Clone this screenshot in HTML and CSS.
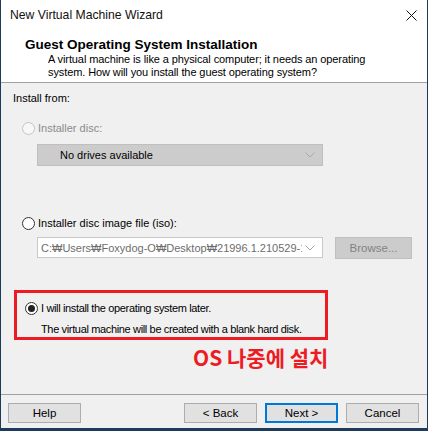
FILE: index.html
```html
<!DOCTYPE html>
<html lang="en">
<head>
    <meta charset="UTF-8" />
    <title>New Virtual Machine Wizard</title>
    <link rel="stylesheet" href="styles.css">
</head>
<body>
    <div class="window">
        <div class="titlebar">
            <span class="title">New Virtual Machine Wizard</span>
            <svg class="close" width="11" height="11" viewBox="0 0 11 11">
                <path d="M0.5 0.5 L10.5 10.5 M10.5 0.5 L0.5 10.5" stroke="#111" stroke-width="1" fill="none"/>
            </svg>
        </div>

        <!-- header with page title -->
        <div class="header">
            <div class="heading">Guest Operating System Installation</div>
            <div class="desc">A virtual machine is like a physical computer; it needs an operating<br>system. How will you install the guest operating system?</div>
        </div>

        <div class="content">
            <div class="label">Install from:</div>

            <div class="option disabled first">
                <span class="radio"></span>
                <span>Installer disc:</span>
            </div>
            <div class="combo grey">
                <span class="combo-text">No drives available</span>
                <svg class="chev" width="10" height="6" viewBox="0 0 10 6"><path d="M0.5 0.5 L5 5 L9.5 0.5" stroke="#a8a8a8" fill="none"/></svg>
            </div>

            <div class="option second">
                <span class="radio"></span>
                <span>Installer disc image file (iso):</span>
            </div>
            <div class="file-row">
                <div class="combo white">
                    <span class="combo-text path">C:&#8361;Users&#8361;Foxydog-O&#8361;Desktop&#8361;21996.1.210529-1</span>
                    <svg class="chev" width="10" height="6" viewBox="0 0 10 6"><path d="M0.5 0.5 L5 5 L9.5 0.5" stroke="#a8a8a8" fill="none"/></svg>
                </div>
                <button class="btn browse" disabled>Browse...</button>
            </div>

            <div class="highlight">
                <div class="option checked">
                    <span class="radio"><span class="dot"></span></span>
                    <span>I will install the operating system later.</span>
                </div>
                <div class="note">The virtual machine will be created with a blank hard disk.</div>
            </div>
            <div class="annotation">OS 나중에 설치</div>
        </div>

        <div class="footer">
            <button class="btn">Help</button>
            <div class="nav">
                <button class="btn">&lt; Back</button>
                <button class="btn default">Next &gt;</button>
                <button class="btn">Cancel</button>
            </div>
        </div>
    </div>
</body>
</html>
```

FILE: styles.css
```css
body {
    margin: 0;
    padding: 0;
    font-family: 'Liberation Sans', Arial, sans-serif;
    font-size: 11px;
    color: #000;
}
.window {
    width: 426px;
    height: 428px;
    border-left: 1px solid #1f3b5c;
    border-right: 1px solid #1f3b5c;
    border-bottom: 3px solid #1f3b5c;
    background-color: #f0f0f0;
    display: flex;
    flex-direction: column;
}

/* title bar */
.titlebar {
    height: 30px;
    flex-shrink: 0;
    background-color: #fff;
    display: flex;
    align-items: center;
    justify-content: space-between;
    padding: 0 10px 0 9px;
}
.title {
    font-size: 12.2px;
    color: #111;
}

/* header */
.header {
    height: 45px;
    flex-shrink: 0;
    background-color: #fff;
    padding: 7px 0 0 24px;
    border-bottom: 1px solid #a0a0a0;
}
.heading {
    font-weight: bold;
    font-size: 13.5px;
    line-height: 16px;
}
.desc {
    padding-left: 23px;
    line-height: 13px;
    font-size: 11px;
    letter-spacing: -0.1px;
}

/* main area */
.content {
    flex: 1;
    padding: 8px 0 0 12px;
    border-bottom: 1px solid #a0a0a0;
}
.label {
    line-height: 14px;
}
.option {
    display: flex;
    align-items: center;
    gap: 3px;
    line-height: 14px;
    margin-left: 9px;
}
.option.first {
    margin-top: 16px;
}
.option.second {
    margin-top: 50px;
}
.option.disabled {
    color: #8a8a8a;
}
.radio {
    width: 11px;
    height: 11px;
    border: 1px solid #333;
    border-radius: 50%;
    background-color: #fff;
    display: flex;
    align-items: center;
    justify-content: center;
}
.disabled .radio {
    border-color: #c4c4c4;
    background-color: #f7f7f7;
}
.dot {
    width: 7px;
    height: 7px;
    border-radius: 50%;
    background-color: #222;
}

.combo {
    display: flex;
    align-items: center;
    justify-content: space-between;
    box-sizing: border-box;
    width: 286px;
}
.combo.grey {
    height: 22px;
    margin: 9px 0 0 24px;
    background-color: #cccccc;
    border: 1px solid #bfbfbf;
    padding: 0 7px 0 22px;
}
.combo.white {
    height: 21px;
    background-color: #fff;
    border: 1px solid #c8c8c8;
    padding: 0 7px 0 3px;
}
.combo-text {
    white-space: nowrap;
    overflow: hidden;
}
.path {
    color: #6d6d6d;
    width: 261px;
}
.file-row {
    display: flex;
    gap: 12px;
    margin: 7px 0 0 24px;
}

.btn {
    height: 20px;
    width: 73px;
    font-family: inherit;
    font-size: 11.5px;
    background-color: #e1e1e1;
    border: 1px solid #adadad;
    color: #000;
    padding: 0;
}
.btn.browse {
    width: 77px;
    height: 22px;
    background-color: #cccccc;
    border-color: #bfbfbf;
    color: #838383;
}
.btn.default {
    border: 2px solid #0078d7;
}

/* red annotation box */
.highlight {
    width: 308px;
    height: 44px;
    margin-top: 31px;
    margin-left: 1px;
    border: 3px solid #ed1c24;
    letter-spacing: -0.35px;
}
.highlight .option {
    margin-top: 8px;
    margin-left: 8px;
}
.note {
    margin: 7px 0 0 24px;
    line-height: 14px;
}
.annotation {
    color: #ed1c24;
    font-family: 'Noto Sans CJK KR', sans-serif;
    font-weight: bold;
    font-size: 21px;
    line-height: 22px;
    margin: 6px 0 0 180px;
}

/* bottom buttons */
.footer {
    height: 25px;
    flex-shrink: 0;
    display: flex;
    justify-content: space-between;
    align-items: flex-start;
    padding: 8px 8px 0 7px;
}
.nav {
    display: flex;
    gap: 8px;
}
```
